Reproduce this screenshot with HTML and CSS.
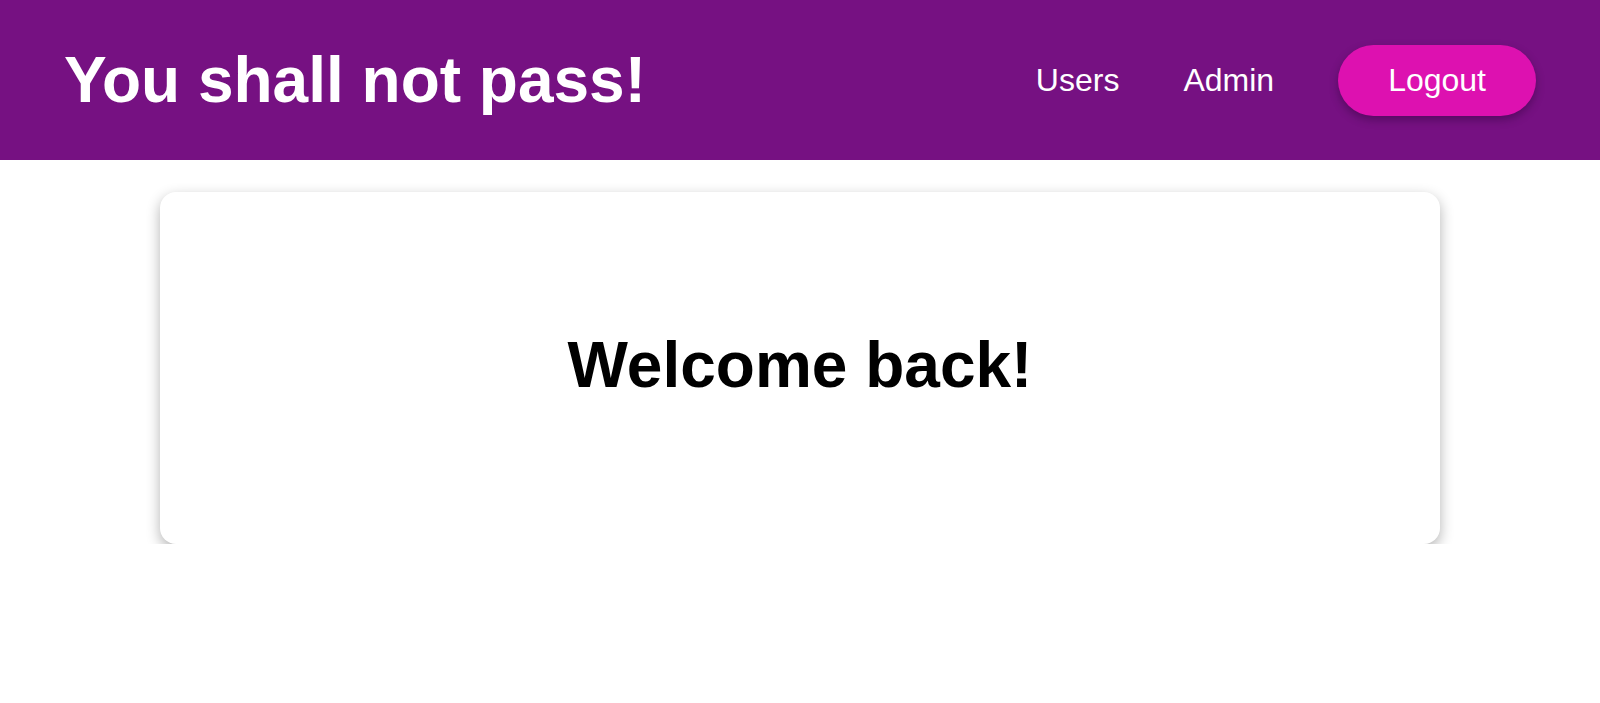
FILE: index.html
```html
<!DOCTYPE html>
<html lang="en">
<head>
<meta charset="utf-8">
<title>You shall not pass!</title>
<link rel="stylesheet" href="styles.css">
</head>
<body>
<header class="topbar">
  <h1 class="brand">You shall not pass!</h1>
  <nav class="nav">
    <a class="nav-link" href="#">Users</a>
    <a class="nav-link" href="#">Admin</a>
    <button class="logout" type="button">Logout</button>
  </nav>
</header>
<main class="content">
  <section class="card">
    <h2 class="welcome">Welcome back!</h2>
  </section>
</main>
</body>
</html>
```

FILE: styles.css
```css
* { box-sizing: border-box; }
html, body {
  margin: 0;
  padding: 0;
  background: #ffffff;
  font-family: "Liberation Sans", Arial, sans-serif;
}
.topbar {
  height: 160px;
  background: #761182;
  display: flex;
  align-items: center;
  justify-content: space-between;
  padding: 0 64px;
}
.brand {
  margin: 0;
  color: #ffffff;
  font-size: 64px;
  font-weight: 700;
  line-height: 1;
}
.nav {
  display: flex;
  align-items: center;
  gap: 64px;
}
.nav-link {
  color: #ffffff;
  text-decoration: none;
  font-size: 32px;
  line-height: 37px;
}
.logout {
  font-family: inherit;
  font-size: 32px;
  line-height: 37px;
  color: #ffffff;
  background: #dd11b0;
  border: none;
  border-radius: 40px;
  padding: 17px 50px;
  box-shadow: 0 4px 8px rgba(40, 0, 50, 0.4);
  cursor: pointer;
}
.content {
  padding-top: 32px;
  display: flex;
  justify-content: center;
}
.card {
  width: 1280px;
  height: 352px;
  padding-bottom: 6px;
  background: #ffffff;
  border-radius: 16px;
  box-shadow: 0 5px 14px rgba(0, 0, 0, 0.3);
  display: flex;
  align-items: center;
  justify-content: center;
}
.welcome {
  margin: 0;
  font-size: 64px;
  font-weight: 700;
  color: #000000;
  line-height: 74px;
}
```
